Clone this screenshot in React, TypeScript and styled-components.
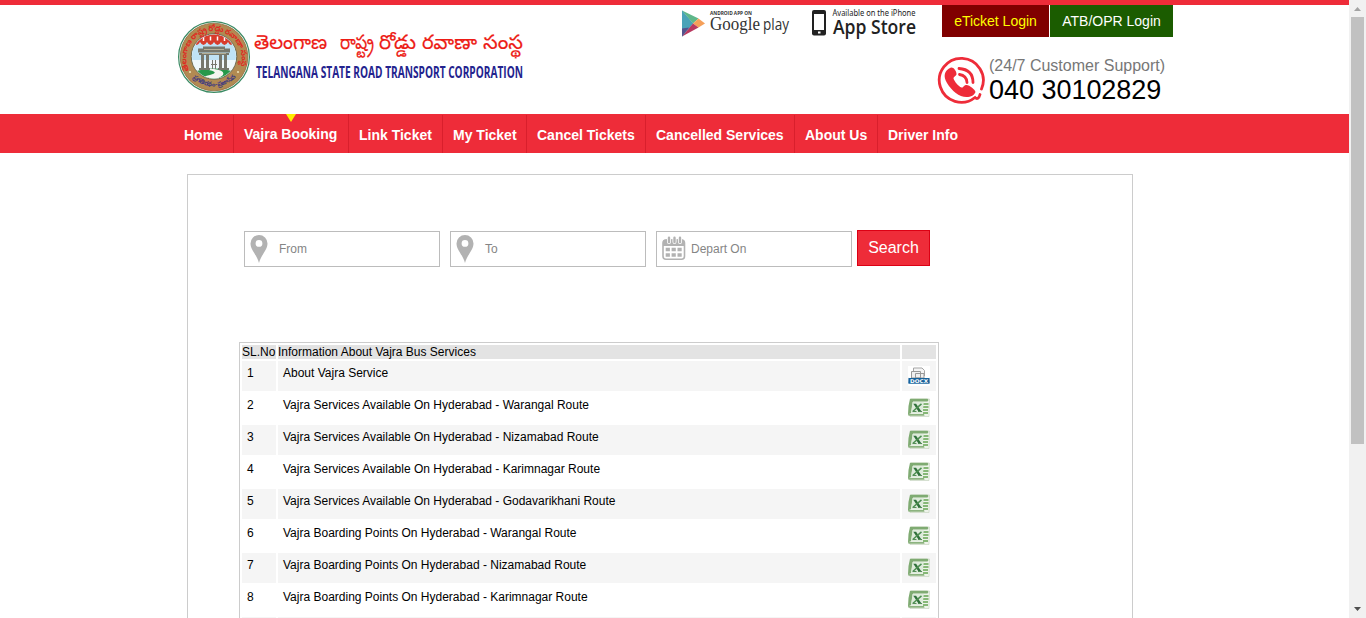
import React from 'react';
import styled, { createGlobalStyle } from 'styled-components';

const Global = createGlobalStyle`
  * { box-sizing: border-box; }
  body { margin: 0; background: #fff; overflow: hidden; font-family: "Liberation Sans", Arial, sans-serif; }
`;
const Shell = styled.div`display: flex; width: 1366px; height: 618px; overflow: hidden;`;
const Page = styled.main`width: 1349px; height: 618px; overflow: hidden; border-top: 5px solid #ee2c39;`;
const Header = styled.header`display: flex; height: 109px; padding-left: 174px;`;
const Brand = styled.div`display: flex; width: 506px; padding-top: 12px;`;
const Stores = styled.div`display: flex; width: 257px;`;
const Account = styled.div`display: flex; flex-direction: column;`;
const Logins = styled.div`display: flex; gap: 1px; margin-left: 5px;`;
const Login = styled.a<{ $bg: string; $fg: string; $w: number }>`
  width: ${p => p.$w}px; height: 32px; line-height: 32px; text-align: center;
  font-size: 14px; background: ${p => p.$bg}; color: ${p => p.$fg};
`;
const Support = styled.div`display: flex; padding-top: 19px;`;
const SupportText = styled.div`display: flex; flex-direction: column; margin: 1px 0 0 2px;`;
const SupportLabel = styled.span`font-size: 16px; line-height: 18px; color: #777; white-space: nowrap;`;
const Phone = styled.span`font-size: 27px; line-height: 30px; color: #000; letter-spacing: -0.03px; white-space: nowrap;`;
const Nav = styled.nav`display: flex; height: 39px; padding-left: 174px; background: #ee2c39;`;
const NavItem = styled.a<{ $w: number; $active?: boolean; $last?: boolean }>`
  position: relative; width: ${p => p.$w}px; height: ${p => (p.$active ? 39 : 38)}px;
  margin-top: ${p => (p.$active ? 0 : 1)}px; padding-left: 10px; line-height: 40px;
  font-size: 14px; font-weight: bold; color: #fff; white-space: nowrap;
  border-right: ${p => (p.$last ? 0 : 1)}px solid #d91f2c;
`;
const Marker = styled.i`
  position: absolute; top: 0; left: 52px; width: 0; height: 0;
  border: 5px solid transparent; border-top: 8px solid #ffec00; border-bottom: 0;
`;
const Panel = styled.section`
  width: 946px; height: 700px; margin: 21px 0 0 187px; padding: 55px 0 0 51px; border: 1px solid #ccc;
`;
const SearchBar = styled.form`display: flex; gap: 10px; margin-left: 5px;`;
const Field = styled.div`
  display: flex; align-items: center; width: 196px; height: 36px; margin-top: 1px; padding: 0 6px 0 5px;
  border: 1px solid #bcbcbc; font-size: 12px; color: #858585;
`;
const FieldLabel = styled.span`margin-left: 5px;`;
const FieldIcon = styled.span`display: flex; width: 24px; height: 28px;`;
const SearchButton = styled.button`
  width: 73px; height: 36px; margin-left: -5px; padding: 0; border: 1px solid #dc0014; background: #ee2c39;
  color: #fff; font: 16px/32px "Liberation Sans", Arial, sans-serif;
`;
const Table = styled.div`
  display: flex; flex-direction: column; gap: 2px; width: 700px; margin-top: 75px; padding: 2px;
  border: 1px solid #ccc; font-size: 12px; color: #000;
`;
const Row = styled.div<{ $bg: string; $head?: boolean }>`
  display: grid; grid-template-columns: 34px 622px 34px; column-gap: 2px; height: ${p => (p.$head ? 14 : 30)}px;
  & > div { height: ${p => (p.$head ? 14 : 30)}px; background: ${p => p.$bg}; padding: ${p => (p.$head ? 0 : '5px 0 0 5px')}; line-height: 14px; white-space: nowrap; }
  & > div > svg { display: block; margin-top: -1px; }
`;
const Scrollbar = styled.aside`
  display: flex; flex-direction: column; align-items: center; width: 17px; height: 618px; background: #f1f1f1;
`;
const Thumb = styled.div`width: 13px; height: 427px; background: #c1c1c1;`;
const Grow = styled.div`flex: 1;`;

const Seal = () => (
  <svg width="360" height="84" viewBox="174 17 360 84">
    <defs>
      <path id="upper" d="M189.5 71A27.5 27.5 0 1 1 238.5 71" />
      <path id="lower" d="M190 75A31 31 0 0 0 238 75" />
      <clipPath id="scene"><circle cx="214" cy="56.5" r="22" /></clipPath>
    </defs>
    <circle cx="214" cy="57" r="35.4" fill="#fff" stroke="#3a8a63" strokeWidth="1.2" />
    <circle cx="214" cy="57" r="33.8" fill="#b28a52" stroke="#8d6a3c" strokeWidth=".8" />
    <circle cx="214" cy="56.5" r="22.8" fill="#f0f7fa" stroke="#6d6d55" strokeWidth="1" />
    <g clipPath="url(#scene)">
      <path d="M190 34h48v26h-48z" fill="#bfe2f5" />
      <path d="M190 73q24-9 48 0v12h-48z" fill="#27994a" />
      <path d="M204 69q18 3 6 6q-14 3-10 10h22q-9-5 0-9q5-5-8-7z" fill="#f5f6f0" />
      <path d="M194 42q2.500 6 6 0q3.500 6 7 0q3.500 6 7 0q3.500 6 7 0q3.500 6 7 0q3 6 6 0v-5q-20-6-40 0z" fill="#d83c2c" />
      <path d="M197 38v4M203.500 37v4M210.500 36.500v4M217.500 36.500v4M224.500 37v4M231 38v4" stroke="#fff" strokeWidth="1.500" />
      <g fill="#77776c">
        <path d="M203 46.500h22v2h5v4h-32v-4h5z" />
        <path d="M199 53h30v2h-30zM201 55h3v14h-3zM206 55h3v14h-3zM219 55h3v14h-3zM224 55h3v14h-3zM199 68h11v2h-11zM218 68h11v2h-11z" />
        <path d="M212 60h1v9h-1zM215 60h1v9h-1zM211 64h6v1h-6z" />
      </g>
      <path d="M204 49.500h20M202 53.500h24" stroke="#c5bd9f" strokeWidth=".8" />
    </g>
    <text fill="#df2b23" fontSize="8" fontWeight="bold" fontFamily="'Noto Sans Telugu', 'Noto Sans', sans-serif"><textPath href="#upper" textLength="106">తెలంగాణ రాష్ట్ర రోడ్డు రవాణా సంస్థ</textPath></text>
    <text fill="#403a80" fontSize="6.500" fontWeight="bold" fontFamily="'Noto Sans Telugu', 'Noto Sans', sans-serif"><textPath href="#lower" startOffset="3" textLength="48">ప్రగతి రథం - ప్రజా సేవ</textPath></text>
    <circle cx="190" cy="72" r="1.1" fill="#e9e0b6" /><circle cx="238" cy="72" r="1.1" fill="#e9e0b6" />
    <g fill="#ed1c16" stroke="#ed1c16" strokeWidth=".2" fontSize="20" fontFamily="'Noto Sans Telugu', 'Noto Sans', sans-serif">
      <text x="254" y="49" textLength="73" lengthAdjust="spacingAndGlyphs">తెలంగాణ</text>
      <text x="340" y="49" textLength="34" lengthAdjust="spacingAndGlyphs">రాష్ట్ర</text>
      <text x="379" y="49" textLength="37" lengthAdjust="spacingAndGlyphs">రోడ్డు</text>
      <text x="422" y="49" textLength="55" lengthAdjust="spacingAndGlyphs">రవాణా</text>
      <text x="483" y="49" textLength="40" lengthAdjust="spacingAndGlyphs">సంస్థ</text>
    </g>
    <text x="256" y="78" fill="#23238e" fontFamily="'Open Sans', sans-serif" fontWeight="bold" fontSize="16" textLength="267" lengthAdjust="spacingAndGlyphs">TELANGANA STATE ROAD TRANSPORT CORPORATION</text>
  </svg>
);

const StoreBadges = () => (
  <svg width="257" height="45" viewBox="680 5 257 45">
    <path d="M682 10.5v26l11-13z" fill="#3d9fc0" />
    <path d="M682 10.5l11 13-11 13z" fill="#4aa3b8" />
    <path d="M682 10.5l16.5 8-5.5 5z" fill="#5fb78a" />
    <path d="M698.5 18.500l6.500 5-6.500 4-5.500-4z" fill="#f5a05a" />
    <path d="M682 36.500l11-13 5.500 4z" fill="#b9385f" />
    <path d="M682 36.500v-8l7-1z" fill="#55538d" />
    <g fill="#333">
      <text x="710" y="14.800" fontFamily="'Open Sans', sans-serif" fontWeight="bold" fontSize="4.800" textLength="42">ANDROID APP ON</text>
      <text x="710" y="29.500" fontFamily="'Liberation Serif', serif" fontSize="18.500" textLength="50" lengthAdjust="spacingAndGlyphs">Google</text>
      <text x="763" y="29.500" fontFamily="'Open Sans', sans-serif" fontSize="16.500" textLength="26" lengthAdjust="spacingAndGlyphs">play</text>
    </g>
    <rect x="812" y="10" width="14" height="25.500" rx="2" fill="#222" />
    <rect x="814" y="14" width="10" height="16" fill="#fff" />
    <rect x="818" y="31.500" width="2.500" height="2" fill="#fff" />
    <g fill="#222" fontFamily="'Open Sans', sans-serif">
      <text x="832.500" y="15.600" fontSize="8" textLength="83" lengthAdjust="spacingAndGlyphs" fontFamily="'Noto Sans', sans-serif">Available on the iPhone</text>
      <text x="833" y="33.700" fontSize="19" fontWeight="600" textLength="83" lengthAdjust="spacingAndGlyphs">App Store</text>
    </g>
  </svg>
);

const CallIcon = () => (
  <svg width="50" height="50" viewBox="938 56 50 50" fill="none" stroke="#ee2c39">
    <path d="M982.500 89A22 22 0 1 0 976 97.500c2 2 4 1 5-3" strokeWidth="2.800" strokeLinecap="round" />
    <path d="M952 67.500c-7 3-8 9-4 15.500c5 8 12 14 19.500 14c4.500 0 8-2 9-5c0-2-6-7-9-7c-3 0-3 3-5 2.500c-3-1-7-6-8-9c0-2 3-2.500 3-4.500c0-3-3-7-5.500-6.500z" fill="#ee2c39" stroke="none" />
    <path d="M960.500 74.500q7 1 7.500 8M960 68.500q14 1 14 14" strokeWidth="2.800" strokeLinecap="round" />
  </svg>
);

const Pin = () => (
  <svg width="18" height="28" viewBox="0 0 18 28">
    <path fillRule="evenodd" d="M9 0a8.500 8.500 0 0 1 8.500 8.500C17.500 15 11 20 9 28C7 20 .5 15 .5 8.500A8.500 8.500 0 0 1 9 0zm0 5a3.400 3.400 0 1 0 0 6.800A3.400 3.400 0 0 0 9 5z" fill="#b2b2b2" />
  </svg>
);

const Calendar = () => (
  <svg width="24" height="28" viewBox="0 0 24 28">
    <rect x="1" y="5" width="21.500" height="19.200" rx="3" fill="#fff" stroke="#b2b2b2" strokeWidth="1.600" />
    <path d="M1 11V7q0-2.500 3-2.500h15.500q3 0 3 2.500v4z" fill="#b2b2b2" />
    <path d="M7 3v4M12.500 3v4M18 3v4" stroke="#fff" strokeWidth="4" strokeLinecap="round" />
    <path d="M7 2.800v4.200M12.500 2.800v4.200M18 2.800v4.200" stroke="#b2b2b2" strokeWidth="2.400" strokeLinecap="round" />
    <path d="M3.700 14.500h16.100M3.700 20h16.100" stroke="#b2b2b2" strokeWidth="3.600" strokeDasharray="4.200 1.700" />
  </svg>
);

const Docx = () => (
  <svg width="24" height="24" viewBox="0 0 24 24">
    <path d="M1 1h22v20H1z" fill="#fff" />
    <path d="M6.500 11V3h8.500l2.500 2.500V11" fill="#f4f4f4" stroke="#a5a5a5" />
    <path d="M4.500 13V6.500h9V13zM8.500 13V8.500h8.500V13z" fill="#f0f0f0" stroke="#999" />
    <path d="M2 11.800v2h20v-2l.5 6.700h-21z" fill="#17629b" />
    <path d="M1.500 13h21v5.500h-21z" fill="#17629b" />
    <text x="3" y="17.600" fill="#fff" fontSize="5" fontWeight="bold" fontFamily="'DejaVu Sans', sans-serif" textLength="18" lengthAdjust="spacingAndGlyphs">DOCX</text>
  </svg>
);

const Excel = () => (
  <svg width="24" height="24" viewBox="0 0 24 24">
    <path d="M4 2h18.500l-.5 17.500H3z" fill="#eef3ea" stroke="#c9d6c2" strokeWidth=".7" />
    <path d="M3 1.800h17.500l1 1.200-1 1.500H6L4 16l-3 1.500q0-9 2-15.700z" fill="#7fab72" />
    <path d="M1 17h16l.5 1.800H1.500z" fill="#8cb37f" />
    <path d="M16 7h5.500M16 10h5.500M16 13h5M16 16h5" stroke="#86b877" strokeWidth="2.200" />
    <path d="M5.500 5h11.300l-1.300 11.500H4z" fill="#deebdb" />
    <path d="M6.300 6.700h2.800l5.200 7.500h-3z" fill="#31713c" />
    <path d="M14.500 6.900L6 14.200" stroke="#4d8f50" strokeWidth="1.500" />
    <path d="M5.500 14.500h4M11 14.500h4" stroke="#558c58" strokeWidth="1" />
  </svg>
);

const items: [string, number][] = [
  ['Home', 60], ['Vajra Booking', 115], ['Link Ticket', 94], ['My Ticket', 84],
  ['Cancel Tickets', 119], ['Cancelled Services', 149], ['About Us', 83], ['Driver Info', 100],
];
const services = [
  'About Vajra Service',
  'Vajra Services Available On Hyderabad - Warangal Route',
  'Vajra Services Available On Hyderabad - Nizamabad Route',
  'Vajra Services Available On Hyderabad - Karimnagar Route',
  'Vajra Services Available On Hyderabad - Godavarikhani Route',
  'Vajra Boarding Points On Hyderabad - Warangal Route',
  'Vajra Boarding Points On Hyderabad - Nizamabad Route',
  'Vajra Boarding Points On Hyderabad - Karimnagar Route',
];

export default function App() {
  return (
    <Shell>
      <Global />
      <Page>
        <Header>
          <Brand><Seal /></Brand>
          <Stores><StoreBadges /></Stores>
          <Account>
            <Logins>
              <Login $w={107} $bg="#800000" $fg="#ffff00">eTicket Login</Login>
              <Login $w={123} $bg="#1b5c00" $fg="#ffffff">ATB/OPR Login</Login>
            </Logins>
            <Support>
              <CallIcon />
              <SupportText>
                <SupportLabel>(24/7 Customer Support)</SupportLabel>
                <Phone>040 30102829</Phone>
              </SupportText>
            </Support>
          </Account>
        </Header>
        <Nav>
          {items.map(([label, w], i) => (
            <NavItem key={label} $w={w} $active={i === 1} $last={i === items.length - 1}>
              {label}{i === 1 && <Marker />}
            </NavItem>
          ))}
        </Nav>
        <Panel>
          <SearchBar>
            <Field><FieldIcon><Pin /></FieldIcon><FieldLabel>From</FieldLabel></Field>
            <Field><FieldIcon><Pin /></FieldIcon><FieldLabel>To</FieldLabel></Field>
            <Field><FieldIcon><Calendar /></FieldIcon><FieldLabel>Depart On</FieldLabel></Field>
            <SearchButton type="button">Search</SearchButton>
          </SearchBar>
          <Table>
            <Row $head $bg="#e3e3e3"><div>SL.No</div><div>Information About Vajra Bus Services</div><div /></Row>
            {services.map((name, i) => (
              <Row key={name} $bg={i % 2 ? '#fff' : '#f5f5f5'}>
                <div>{i + 1}</div><div>{name}</div><div>{i === 0 ? <Docx /> : <Excel />}</div>
              </Row>
            ))}
            <Row $bg="#f5f5f5"><div /><div /><div /></Row>
          </Table>
        </Panel>
      </Page>
      <Scrollbar>
        <svg width="17" height="17"><path d="M5 11h7l-3.500-4z" fill="#a3a3a3" /></svg>
        <Thumb />
        <Grow />
        <svg width="17" height="17"><path d="M5 6h7l-3.500 4z" fill="#505050" /></svg>
      </Scrollbar>
    </Shell>
  );
}
